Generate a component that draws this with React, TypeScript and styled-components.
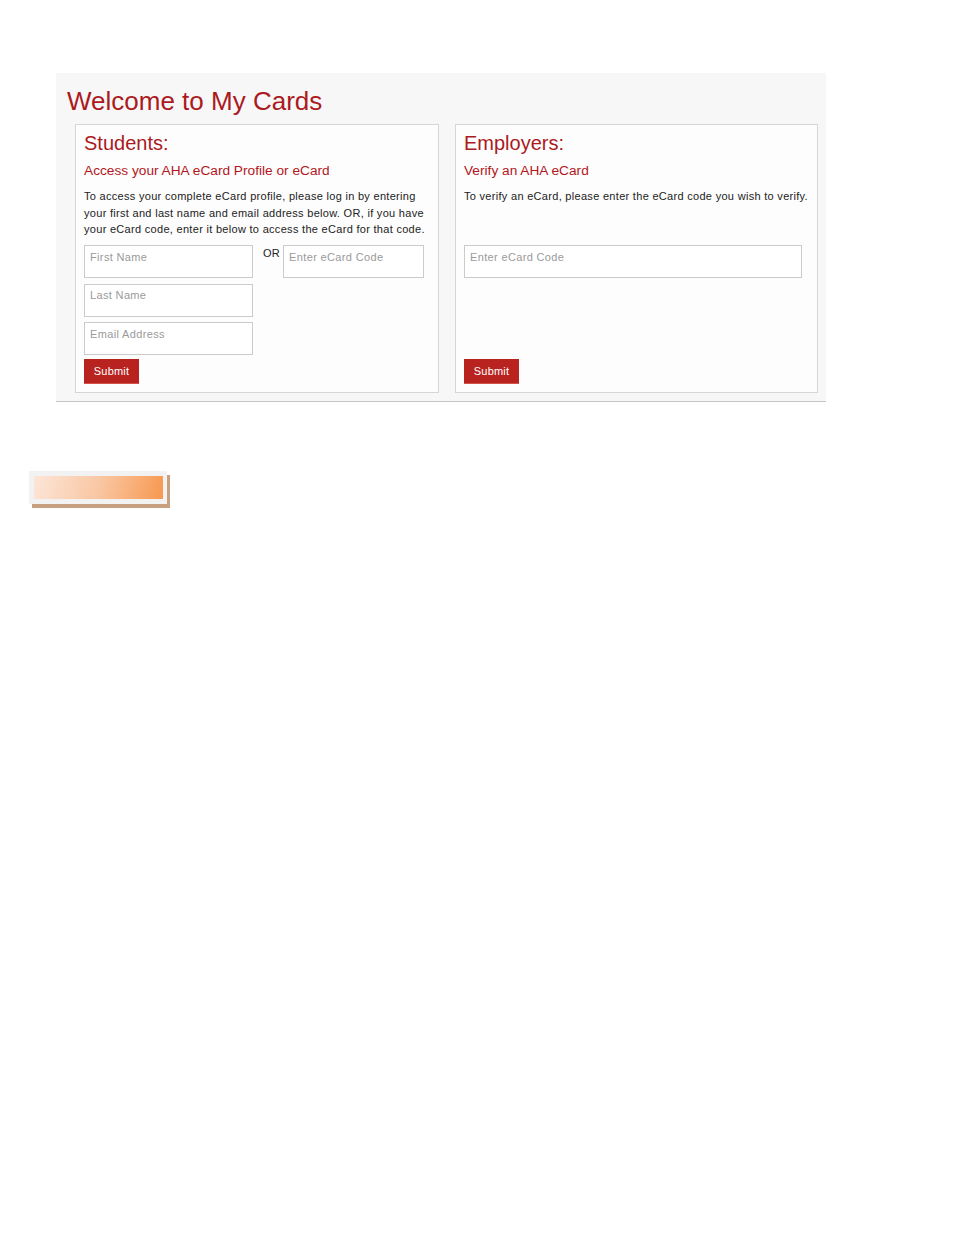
import React from "react";
import styled, { createGlobalStyle } from "styled-components";

const Global = createGlobalStyle`
  html, body { margin: 0; padding: 0; background: #ffffff; }
  body { font-family: "Liberation Sans", Arial, sans-serif; }
  * { box-sizing: border-box; }
`;

const Page = styled.div`
  width: 954px;
  min-height: 1235px;
  padding-top: 73px;
`;

const Panel = styled.section`
  margin-left: 56px;
  width: 770px;
  background: #f7f7f7;
  border-bottom: 1px solid #c4c4c4;
  padding: 13px 8px 8px 11px;
`;

const Title = styled.h1`
  margin: 0;
  font-size: 26px;
  line-height: 30px;
  font-weight: normal;
  color: #ab1a1e;
`;

const Columns = styled.div`
  display: grid;
  grid-template-columns: 364px 363px;
  column-gap: 16px;
  margin: 8px 0 0 8px;
`;

const Box = styled.div`
  display: flex;
  flex-direction: column;
  background: #fdfdfd;
  border: 1px solid #d6d6d6;
  padding: 6px 8px 8px 8px;
`;

const BoxTitle = styled.h2`
  margin: 0;
  font-size: 20px;
  line-height: 24px;
  font-weight: normal;
  color: #ab1a1e;
`;

const SubTitle = styled.h3`
  margin: 8px 0 0;
  font-size: 13.7px;
  line-height: 16px;
  font-weight: normal;
  color: #b3161c;
`;

const Desc = styled.p`
  margin: 9px 0 7px;
  min-height: 50px;
  font-size: 11px;
  line-height: 16.5px;
  letter-spacing: 0.3px;
  color: #222;
`;

const FormRow = styled.div`
  display: flex;
  align-items: flex-start;
`;

const Stack = styled.div`
  display: flex;
  flex-direction: column;
  gap: 5.5px;
`;

const Or = styled.span`
  margin: 1px 3px 0 10px;
  font-size: 11px;
  line-height: 14px;
  letter-spacing: 0.3px;
  color: #222;
`;

const Field = styled.input<{ $w: number }>`
  display: block;
  width: ${(p) => p.$w}px;
  height: 33px;
  margin: 0;
  border: 1px solid #cbcbcb;
  background: #ffffff;
  padding: 2px 5px 12px;
  font-family: "Liberation Sans", Arial, sans-serif;
  font-size: 11px;
  line-height: 16px;
  letter-spacing: 0.35px;
  color: #333;
  outline: none;
  &::placeholder { color: #9a9a9a; }
`;

const Submit = styled.button<{ $push?: boolean }>`
  align-self: flex-start;
  margin-top: ${(p) => (p.$push ? "auto" : "4px")};
  width: 55px;
  height: 25px;
  padding: 0;
  border: none;
  border-bottom: 1px solid #d5524c;
  background: #b8231f;
  color: #ffffff;
  font-family: "Liberation Sans", Arial, sans-serif;
  font-size: 11px;
  letter-spacing: 0.2px;
  cursor: pointer;
`;

const Badge = styled.div`
  margin: 69px 0 0 29px;
  width: 138px;
  height: 33px;
  padding: 5px 4px 5px 5px;
  background: #f2f2f2;
  box-shadow: 3px 4px 0 #c9a07f;
`;

const BadgeFill = styled.div`
  width: 100%;
  height: 100%;
  background: linear-gradient(105deg, #fce6d8 0%, #f9c7a3 50%, #f79850 100%);
`;

export default function App() {
  return (
    <Page>
      <Global />
      <Panel>
        <Title>Welcome to My Cards</Title>
        <Columns>
          <Box>
            <BoxTitle>Students:</BoxTitle>
            <SubTitle>Access your AHA eCard Profile or eCard</SubTitle>
            <Desc>
              To access your complete eCard profile, please log in by entering
              your first and last name and email address below. OR, if you have
              your eCard code, enter it below to access the eCard for that code.
            </Desc>
            <FormRow>
              <Stack>
                <Field $w={169} placeholder="First Name" />
                <Field $w={169} placeholder="Last Name" />
                <Field $w={169} placeholder="Email Address" />
              </Stack>
              <Or>OR</Or>
              <Field $w={141} placeholder="Enter eCard Code" />
            </FormRow>
            <Submit>Submit</Submit>
          </Box>
          <Box>
            <BoxTitle>Employers:</BoxTitle>
            <SubTitle>Verify an AHA eCard</SubTitle>
            <Desc>
              To verify an eCard, please enter the eCard code you wish to verify.
            </Desc>
            <Field $w={338} placeholder="Enter eCard Code" />
            <Submit $push>Submit</Submit>
          </Box>
        </Columns>
      </Panel>
      <Badge>
        <BadgeFill />
      </Badge>
    </Page>
  );
}
